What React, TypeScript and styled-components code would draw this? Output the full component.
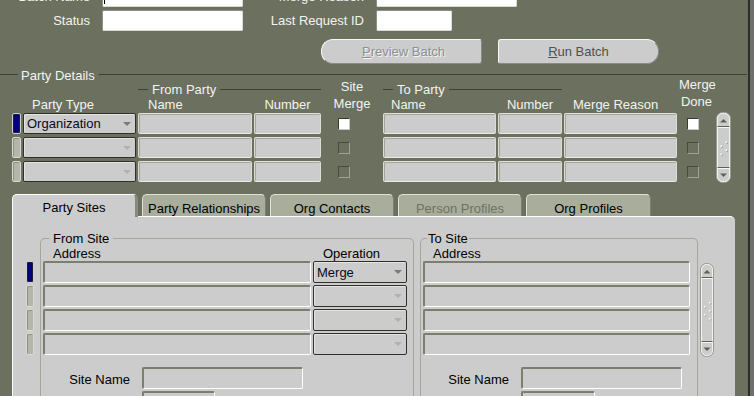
import React from 'react';
import styled, { createGlobalStyle, css } from 'styled-components';

const OLIVE = '#6b705f';
const GREY = '#cccccc';

const Global = createGlobalStyle`
  html, body { margin: 0; padding: 0; background: ${OLIVE}; overflow: hidden; }
  body { font-family: "Liberation Sans", Arial, sans-serif; font-size: 13px; }
  * { box-sizing: border-box; }
`;

const Screen = styled.div`
  width: 754px;
  height: 396px;
  display: flex;
  overflow: hidden;
  background: #6f706a;
`;

const Window = styled.div`
  flex: none;
  width: 750px;
  height: 396px;
  background: ${OLIVE};
  border-right: 2px solid #2c2d2a;
  overflow: hidden;
`;

/* ---------- top form ---------- */
const TopForm = styled.div`
  display: grid;
  grid-template-columns: 90px 141px 109px 141px 93px;
  grid-auto-rows: 21px;
  column-gap: 12px;
  row-gap: 3px;
  align-items: center;
  margin-top: -14px;
`;

const TopLabel = styled.span<{ $raised?: boolean }>`
  color: #f3f3f0;
  text-align: right;
  white-space: nowrap;
  ${p =>
    p.$raised &&
    css`
      align-self: start;
      margin-top: -9px;
    `}
`;

const WhiteInput = styled.div<{ $w?: number; $caret?: boolean }>`
  position: relative;
  width: ${p => (p.$w ? `${p.$w}px` : '100%')};
  height: 21px;
  background: #ffffff;
  border: 1px solid;
  border-color: #8d9183 #dcdcd6 #dcdcd6 #8d9183;
  border-radius: 2px;
  ${p =>
    p.$caret &&
    css`
      &::before {
        content: '';
        position: absolute;
        left: 1px;
        top: 3px;
        width: 1px;
        height: 14px;
        background: #000;
      }
    `}
`;

const ButtonRow = styled.div`
  display: flex;
  gap: 16px;
  margin: 8px 0 0 321px;
`;

const FormButton = styled.div<{ $side: 'left' | 'right'; $disabled?: boolean }>`
  width: 161px;
  height: 25px;
  display: flex;
  align-items: center;
  justify-content: center;
  background: ${GREY};
  border: 1px solid;
  border-color: #f6f6f6 #8a8a86 #8a8a86 #f6f6f6;
  border-radius: ${p => (p.$side === 'left' ? '12px 3px 3px 12px' : '3px 12px 12px 3px')};
  color: ${p => (p.$disabled ? '#8f8f8f' : '#505050')};
  text-shadow: ${p => (p.$disabled ? '1px 1px 0 #f2f2f2' : 'none')};
  padding-left: ${p => (p.$disabled ? '4px' : '0')};
  u { text-decoration: underline; }
`;

/* ---------- party details ---------- */
const SectionHeader = styled.div`
  display: flex;
  align-items: center;
  height: 15px;
  margin-top: 3px;
  margin-right: 1px;
  color: #f3f3f0;
`;

const Rule = styled.div<{ $w?: number }>`
  height: 1px;
  background: #3d4136;
  flex: ${p => (p.$w ? `0 0 ${p.$w}px` : '1 1 auto')};
`;

const SectionTitle = styled.span`
  margin: 1px 4px 0 3px;
  white-space: nowrap;
`;

const partyColumns = css`
  display: grid;
  grid-template-columns: 9px 113px 114px 67px 58px 113px 64px 113px 35px 15px;
  column-gap: 2px;
  margin-left: 12px;
`;

const PartyHeader = styled.div`
  ${partyColumns};
  grid-template-rows: 15px 15px;
  color: #f3f3f0;
`;

const GroupTitle = styled.div<{ $col: number }>`
  grid-column: ${p => p.$col} / span 2;
  grid-row: 1;
  display: flex;
  align-items: center;
  gap: 4px;
  white-space: nowrap;
`;

const ColLabel = styled.div<{ $col: number; $pad?: number; $center?: boolean }>`
  grid-column: ${p => p.$col};
  grid-row: 2;
  padding-left: ${p => p.$pad ?? 0}px;
  text-align: ${p => (p.$center ? 'center' : 'left')};
  line-height: 15px;
  white-space: nowrap;
`;

const StackLabel = styled.div<{ $col: number; $lift?: number }>`
  grid-column: ${p => p.$col};
  grid-row: 1 / span 2;
  align-self: end;
  text-align: center;
  line-height: 17px;
  margin-bottom: ${p => p.$lift ?? 0}px;
  white-space: nowrap;
`;

const PartyRows = styled.div`
  ${partyColumns};
  grid-auto-rows: 21px;
  row-gap: 3px;
  margin-top: 1px;
`;

const Indicator = styled.div<{ $active?: boolean }>`
  width: 100%;
  height: 100%;
  border-radius: 2px;
  border: 1px solid ${p => (p.$active ? '#cfcfcf' : '#dadad4')};
  background: ${p => (p.$active ? '#000080' : '#b3b6a9')};
  box-shadow: ${p =>
    p.$active ? 'inset 1px 1px 0 #1a1a40, inset -1px -1px 0 #1a1a40' : 'inset 1px 1px 0 #8e9283'};
`;

const Field = styled.div<{ $panel?: boolean; $w?: number }>`
  width: ${p => (p.$w ? `${p.$w}px` : '100%')};
  height: 100%;
  background: ${GREY};
  border-radius: 2px;
  ${p =>
    p.$panel
      ? css`
          border-top: 2px solid #7b7f6f;
          border-left: 2px solid #7b7f6f;
          border-bottom: 1px solid #ffffff;
          border-right: 1px solid #ffffff;
        `
      : css`
          border: 1px solid;
          border-color: #e2e2dc #dcdcd6 #e8e8e4 #dcdcd6;
          box-shadow: inset 1px 1px 0 #a3a698;
        `}
`;

const Combo = styled.div`
  height: 100%;
  display: flex;
  align-items: center;
  justify-content: space-between;
  padding: 0 4px 0 3px;
  background: ${GREY};
  border: 1px solid #2f302c;
  border-radius: 2px;
  color: #0a0a1e;
  box-shadow: inset 1px 1px 0 #e4e4e4;
`;

const Arrow = styled.span<{ $active?: boolean }>`
  width: 0;
  height: 0;
  border-left: 4px solid transparent;
  border-right: 4px solid transparent;
  border-top: 4px solid ${p => (p.$active ? '#7a7a7a' : '#b0b0b0')};
`;

const CheckCell = styled.div<{ $pad: number }>`
  display: flex;
  align-items: center;
  padding-left: ${p => p.$pad}px;
`;

const CheckBox = styled.div<{ $active?: boolean }>`
  width: 12px;
  height: 12px;
  border: 1px solid;
  border-color: ${p => (p.$active ? '#3a3c34 #c8c8c8 #c8c8c8 #3a3c34' : '#474b3f #9ea193 #9ea193 #474b3f')};
  background: ${p => (p.$active ? '#ffffff' : 'transparent')};
`;

const ScrollCell = styled.div`
  grid-column: 10;
  grid-row: 1 / span 3;
  margin-top: -1px;
`;

/* ---------- tabs ---------- */
const TabStrip = styled.div`
  display: flex;
  align-items: flex-end;
  gap: 4px;
  height: 22px;
  margin: 12px 0 0 12px;
`;

const Tab = styled.div<{ $active?: boolean; $w: number; $disabled?: boolean }>`
  position: relative;
  width: ${p => p.$w}px;
  height: ${p => (p.$active ? 23 : 22)}px;
  margin-bottom: ${p => (p.$active ? -1 : 0)}px;
  z-index: ${p => (p.$active ? 2 : 0)};
  display: flex;
  align-items: center;
  justify-content: center;
  padding-top: ${p => (p.$active ? 4 : 5)}px;
  padding-bottom: ${p => (p.$active ? 1 : 0)}px;
  background: ${p => (p.$active ? GREY : '#a8ad9c')};
  border-top: 1px solid ${p => (p.$active ? '#ffffff' : '#dfe1d8')};
  border-left: 1px solid ${p => (p.$active ? '#ffffff' : '#dfe1d8')};
  border-right: ${p => (p.$active ? '3px solid #868a7b' : '1px solid #7c8070')};
  border-radius: 5px 5px 0 0;
  color: ${p => (p.$disabled ? '#6f7363' : '#000000')};
  white-space: nowrap;
`;

const TabPanel = styled.div`
  position: relative;
  z-index: 1;
  width: 723px;
  height: 200px;
  margin-left: 12px;
  background: ${GREY};
  border-top: 1px solid #ffffff;
  border-left: 1px solid #ffffff;
  border-top-right-radius: 5px;
`;

const PanelBody = styled.div`
  display: flex;
  align-items: flex-start;
  padding: 21px 0 0 13px;
`;

const IndicatorColumn = styled.div`
  display: flex;
  flex-direction: column;
  gap: 2px;
  width: 8px;
  margin: 23px 6px 0 0;
  & > div { height: 22px; }
`;

const SiteFrame = styled.div<{ $w: number; $ml?: number; $pr: number }>`
  width: ${p => p.$w}px;
  height: 190px;
  margin-left: ${p => p.$ml ?? 0}px;
  padding: 0 ${p => p.$pr}px 0 2px;
  border: 1px solid #a5a79d;
  border-bottom: none;
  border-radius: 5px 5px 0 0;
  color: #000;
`;

const FrameTitleRow = styled.div`
  height: 15px;
  margin-top: -8px;
  line-height: 15px;
`;

const FrameTitle = styled.span<{ $ml: number; $pad: number }>`
  display: inline-block;
  margin-left: ${p => p.$ml}px;
  padding: 0 ${p => p.$pad}px;
  background: ${GREY};
`;

const siteColumns = css<{ $cols: string }>`
  display: grid;
  grid-template-columns: ${p => p.$cols};
  column-gap: 2px;
`;

const FrameHeader = styled.div<{ $cols: string }>`
  ${siteColumns};
  height: 15px;
  line-height: 15px;
`;

const HeadText = styled.span<{ $pad: number }>`
  padding-left: ${p => p.$pad}px;
  white-space: nowrap;
`;

const SiteRows = styled.div<{ $cols: string }>`
  ${siteColumns};
  grid-auto-rows: 22px;
  row-gap: 2px;
`;

const NameGrid = styled.div<{ $label: number }>`
  display: grid;
  grid-template-columns: ${p => p.$label}px 161px;
  grid-auto-rows: 22px;
  column-gap: 12px;
  row-gap: 2px;
  margin-top: 12px;
  align-items: center;
`;

const NameLabel = styled.span`
  text-align: right;
  white-space: nowrap;
  padding-top: 3px;
`;

const PanelScroll = styled.div`
  margin: 25px 0 0 2px;
`;

/* ---------- scrollbar drawing ---------- */
const Scrollbar: React.FC<{ w: number; h: number; dots: number }> = ({ w, h, dots }) => {
  const mid = h / 2;
  const cx = w / 2;
  const pts = Array.from({ length: dots }, (_, i) => ({
    x: i % 2 === 0 ? cx + 2 : cx - 3,
    y: mid - ((dots - 1) * 4) / 2 + i * 4,
  }));
  return (
    <svg width={w} height={h} viewBox={`0 0 ${w} ${h}`} style={{ display: 'block' }}>
      <rect x={0.5} y={0.5} width={w - 1} height={h - 1} rx={6} fill="#cccccc" stroke="#989b8e" />
      <rect x={1.5} y={1.5} width={w - 3} height={h - 3} rx={5} fill="none" stroke="#f2f2f2" />
      <path d={`M${cx - 3.5} 10.5 L${cx} 7 L${cx + 3.5} 10.5 Z`} fill="#5e6254" />
      <line x1={1.5} y1={14.5} x2={w - 1.5} y2={14.5} stroke="#5e6254" />
      <line x1={1.5} y1={15.5} x2={w - 1.5} y2={15.5} stroke="#f4f4f4" />
      <line x1={1.5} y1={h - 15.5} x2={w - 1.5} y2={h - 15.5} stroke="#5e6254" />
      <line x1={1.5} y1={h - 14.5} x2={w - 1.5} y2={h - 14.5} stroke="#f4f4f4" />
      <path d={`M${cx - 3.5} ${h - 9.5} L${cx} ${h - 6} L${cx + 3.5} ${h - 9.5} Z`} fill="#5e6254" />
      {pts.map((p, i) => (
        <g key={i}>
          <rect x={p.x + 0.6} y={p.y + 0.6} width={1.6} height={1.6} fill="#8a8d80" />
          <rect x={p.x} y={p.y} width={1.6} height={1.6} fill="#ffffff" />
        </g>
      ))}
    </svg>
  );
};

/* ---------- app ---------- */
const partyRows = [0, 1, 2];
const siteRows = [0, 1, 2, 3];
const FROM_COLS = '268px 94px';
const TO_COLS = '267px';

export default function App() {
  return (
    <>
      <Global />
      <Screen>
        <Window>
          <TopForm>
            <TopLabel>Batch Name</TopLabel>
            <WhiteInput $caret />
            <TopLabel>Merge Reason</TopLabel>
            <WhiteInput />
            <TopLabel $raised>Priority</TopLabel>

            <TopLabel>Status</TopLabel>
            <WhiteInput />
            <TopLabel>Last Request ID</TopLabel>
            <WhiteInput $w={76} />
            <span />
          </TopForm>

          <ButtonRow>
            <FormButton $side="left" $disabled>
              <span>
                <u>P</u>review Batch
              </span>
            </FormButton>
            <FormButton $side="right">
              <span>
                <u>R</u>un Batch
              </span>
            </FormButton>
          </ButtonRow>

          <SectionHeader>
            <Rule $w={18} />
            <SectionTitle>Party Details</SectionTitle>
            <Rule />
          </SectionHeader>

          <PartyHeader>
            <GroupTitle $col={3}>
              <Rule $w={10} />
              <span>From Party</span>
              <Rule />
            </GroupTitle>
            <StackLabel $col={5}>
              Site
              <br />
              Merge
            </StackLabel>
            <GroupTitle $col={6}>
              <Rule $w={10} />
              <span>To Party</span>
              <Rule />
            </GroupTitle>
            <StackLabel $col={9} $lift={2}>
              Merge
              <br />
              Done
            </StackLabel>
            <ColLabel $col={2} $pad={9}>
              Party Type
            </ColLabel>
            <ColLabel $col={3} $pad={10}>
              Name
            </ColLabel>
            <ColLabel $col={4} $center>
              Number
            </ColLabel>
            <ColLabel $col={6} $pad={8}>
              Name
            </ColLabel>
            <ColLabel $col={7} $center>
              Number
            </ColLabel>
            <ColLabel $col={8} $pad={9}>
              Merge Reason
            </ColLabel>
          </PartyHeader>

          <PartyRows>
            <ScrollCell>
              <Scrollbar w={15} h={71} dots={4} />
            </ScrollCell>
            {partyRows.map(i => (
              <React.Fragment key={i}>
                <Indicator $active={i === 0} />
                <Combo>
                  <span>{i === 0 ? 'Organization' : ''}</span>
                  <Arrow $active={i === 0} />
                </Combo>
                <Field />
                <Field />
                <CheckCell $pad={15}>
                  <CheckBox $active={i === 0} />
                </CheckCell>
                <Field />
                <Field />
                <Field />
                <CheckCell $pad={8}>
                  <CheckBox $active={i === 0} />
                </CheckCell>
              </React.Fragment>
            ))}
          </PartyRows>

          <TabStrip>
            <Tab $active $w={126}>
              Party Sites
            </Tab>
            <Tab $w={124}>Party Relationships</Tab>
            <Tab $w={124}>Org Contacts</Tab>
            <Tab $w={124} $disabled>
              Person Profiles
            </Tab>
            <Tab $w={125}>Org Profiles</Tab>
          </TabStrip>

          <TabPanel>
            <PanelBody>
              <IndicatorColumn>
                {siteRows.map(i => (
                  <Indicator key={i} $active={i === 0} />
                ))}
              </IndicatorColumn>

              <SiteFrame $w={374} $pr={5}>
                <FrameTitleRow>
                  <FrameTitle $ml={6} $pad={4}>
                    From Site
                  </FrameTitle>
                </FrameTitleRow>
                <FrameHeader $cols={FROM_COLS}>
                  <HeadText $pad={10}>Address</HeadText>
                  <HeadText $pad={10}>Operation</HeadText>
                </FrameHeader>
                <SiteRows $cols={FROM_COLS}>
                  {siteRows.map(i => (
                    <React.Fragment key={i}>
                      <Field $panel />
                      <Combo>
                        <span>{i === 0 ? 'Merge' : ''}</span>
                        <Arrow $active={i === 0} />
                      </Combo>
                    </React.Fragment>
                  ))}
                </SiteRows>
                <NameGrid $label={87}>
                  <NameLabel>Site Name</NameLabel>
                  <Field $panel />
                  <span />
                  <Field $panel $w={73} />
                </NameGrid>
              </SiteFrame>

              <SiteFrame $w={278} $ml={6} $pr={6}>
                <FrameTitleRow>
                  <FrameTitle $ml={4} $pad={1}>
                    To Site
                  </FrameTitle>
                </FrameTitleRow>
                <FrameHeader $cols={TO_COLS}>
                  <HeadText $pad={10}>Address</HeadText>
                </FrameHeader>
                <SiteRows $cols={TO_COLS}>
                  {siteRows.map(i => (
                    <Field key={i} $panel />
                  ))}
                </SiteRows>
                <NameGrid $label={86}>
                  <NameLabel>Site Name</NameLabel>
                  <Field $panel />
                  <span />
                  <Field $panel $w={74} />
                </NameGrid>
              </SiteFrame>

              <PanelScroll>
                <Scrollbar w={14} h={94} dots={5} />
              </PanelScroll>
            </PanelBody>
          </TabPanel>
        </Window>
      </Screen>
    </>
  );
}
